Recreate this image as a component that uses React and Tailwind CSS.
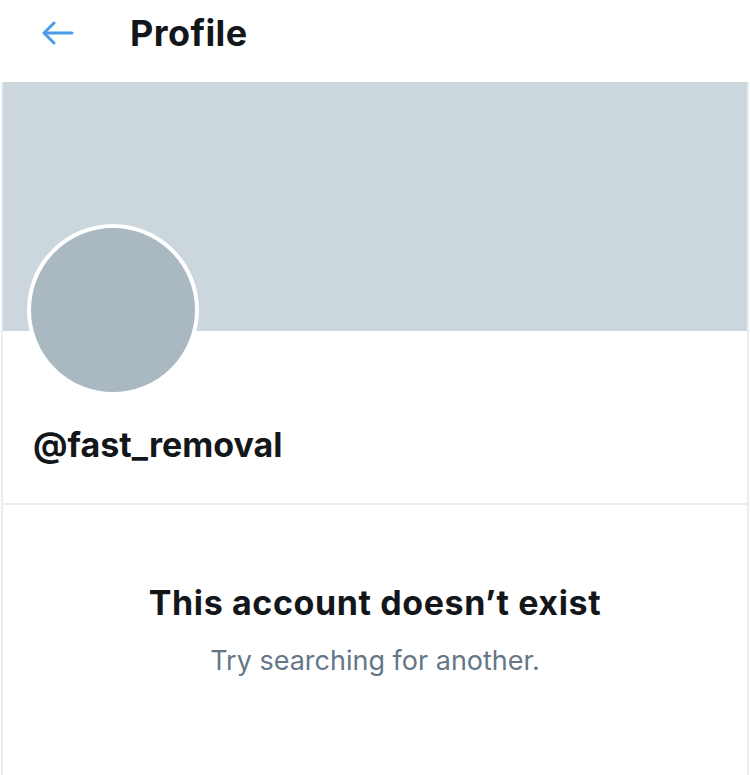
export default function App() {
  return (
    <div className="w-[750px] h-[775px] bg-white overflow-hidden" style={{ fontFamily: 'Inter, "Liberation Sans", sans-serif' }}>
      <header className="h-[82px]">
        <div className="h-[66px] flex items-center">
          <div className="w-[130px] flex items-center pl-[42px]">
            <svg width="32" height="24" viewBox="0 0 32 24" fill="none" stroke="#4a9be8" strokeWidth="3" strokeLinecap="round" strokeLinejoin="round">
              <path d="M30 12H3" />
              <path d="M12 2L2 12l10 10" />
            </svg>
          </div>
          <h1 className="text-[36px] font-bold text-[#14171a] tracking-[0.4px] leading-none">Profile</h1>
        </div>
      </header>
      <div className="mx-px border-x-2 border-[#e8edf1] h-[693px]">
        <div className="h-[249px] bg-[#ccd6dd]" />
        <div className="pl-[24px] -mt-[107px]">
          <div className="w-[172px] h-[172px] rounded-full bg-[#aab8c2] border-[4px] border-white" />
        </div>
        <div className="pl-[30px] pt-[32px] h-[109px] border-b-2 border-[#e8edf1]">
          <div className="text-[34px] font-bold text-[#14171a] leading-none">@fast_removal</div>
        </div>
        <div className="flex flex-col items-center pt-[81px]">
          <div className="text-[34px] font-bold text-[#14171a] leading-none tracking-[0.6px]">This account doesn’t exist</div>
          <div className="text-[27px] text-[#657786] leading-none mt-[27px]">Try searching for another.</div>
        </div>
      </div>
    </div>
  );
}
